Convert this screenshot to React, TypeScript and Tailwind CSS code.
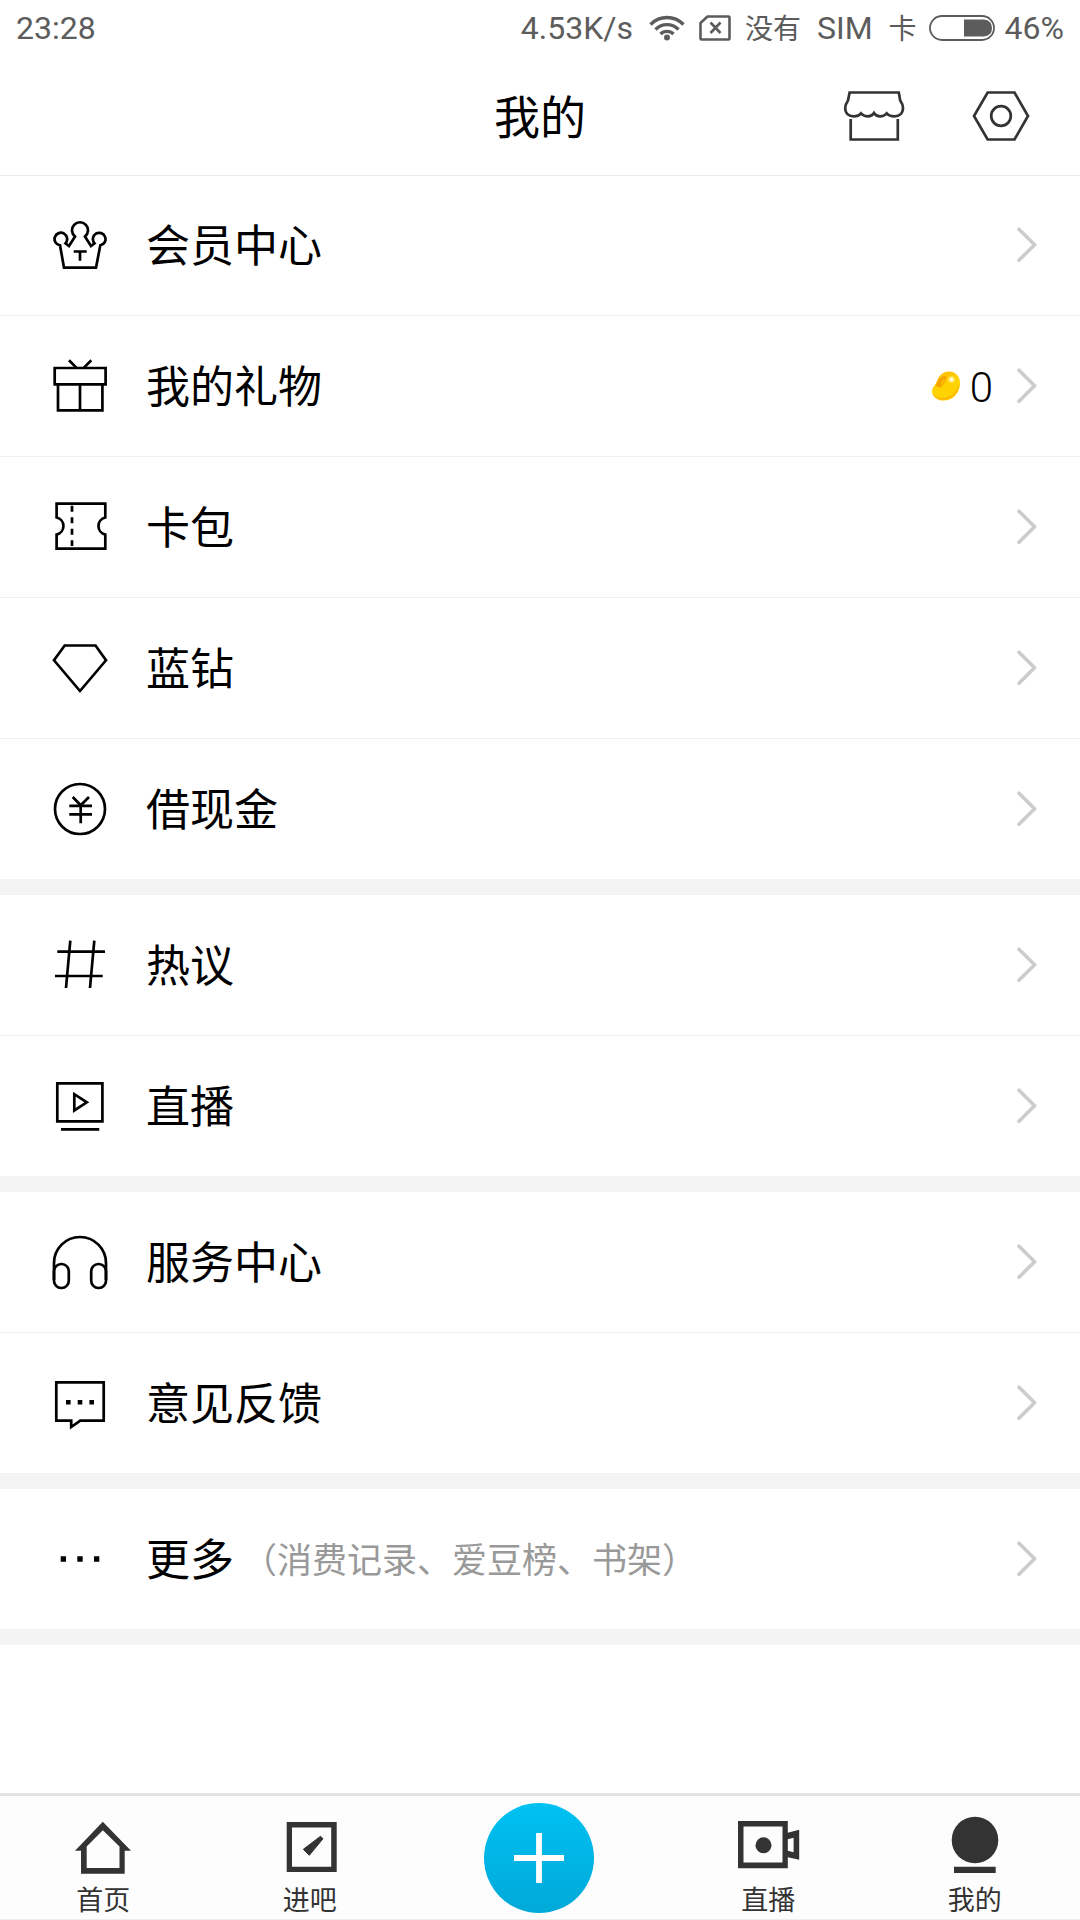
import React from 'react';

type MenuItem = {
  label: string;
  icon: React.ReactNode;
  note?: string;
  beans?: number;
};

const LineIcon: React.FC<{ children: React.ReactNode }> = ({ children }) => (
  <svg
    className="h-14 w-14 shrink-0"
    viewBox="0 0 56 56"
    fill="none"
    stroke="#000"
    strokeWidth="2.7"
    aria-hidden="true"
  >
    {children}
  </svg>
);

const TabIcon: React.FC<{ children: React.ReactNode }> = ({ children }) => (
  <svg className="h-[60px] w-16" viewBox="0 0 64 60" fill="#333" aria-hidden="true">
    {children}
  </svg>
);

const CrownIcon = () => (
  <LineIcon>
    <path d="M8 28.3A6.3 6.3 0 1 1 13.5 26.3L17 29L23 19.5A8 8 0 1 1 33 19.5L39 29L42.5 26.3A6.3 6.3 0 1 1 48.3 28.3L44 50.7H12Z" />
    <path d="M21.7 34.5H34.7M28 34.5V43.7" />
  </LineIcon>
);

const GiftIcon = () => (
  <LineIcon>
    <path d="M2.7 10H53.6V26.4H2.7ZM6 26.4V52.4H50.4V26.4M28 26.4V52.4" />
    <path d="M17 2.3L24.3 9.6M39.3 2.3L32 9.6" />
  </LineIcon>
);

const TicketIcon = () => (
  <LineIcon>
    <path d="M4.6 4.6H53.3V18.5A8.7 8.7 0 0 0 53.3 35.5V49.7H4.6V35.5A8.7 8.7 0 0 0 4.6 18.5Z" />
    <path d="M20 6.7V47" strokeDasharray="6 5.5" />
  </LineIcon>
);

const DiamondIcon = () => (
  <LineIcon>
    <path d="M12.7 5.5H43.5L54 20.3L28 51L2 20.3Z" />
  </LineIcon>
);

const YuanIcon = () => (
  <LineIcon>
    <circle cx="28" cy="28" r="25" />
    <path d="M20.7 16L28.7 24.3L37 16M17.3 24.8H40M17.3 33.4H40M28.7 24V42.3" />
  </LineIcon>
);

const TopicIcon = () => (
  <LineIcon>
    <path d="M5.3 14.7H53M3 39H50.7M18.3 3.7L14 51M42.3 3.7L38 51" />
  </LineIcon>
);

const LiveIcon = () => (
  <LineIcon>
    <path d="M5.3 5.3H50.4V43.3H5.3ZM9 51.3H47.3M22.3 16.2V32.4L34.8 24.3Z" />
  </LineIcon>
);

const HeadphoneIcon = () => (
  <LineIcon>
    <path d="M2 46V29A26 26 0 0 1 54 29V46" />
    <rect x="2" y="30" width="14.8" height="24" rx="7.2" />
    <rect x="39.2" y="30" width="14.8" height="24" rx="7.2" />
  </LineIcon>
);

const FeedbackIcon = () => (
  <LineIcon>
    <path d="M4.3 7.3H51.7V45.7H28.3L19.2 52V45.7H4.3Z" />
    <path d="M14 27.2H18.6M25.7 27.2H30.3M37.4 27.2H42" strokeWidth="4.4" />
  </LineIcon>
);

const MoreIcon = () => (
  <LineIcon>
    <path d="M8.7 28H14M25.3 28H30.7M42 28H47.3" strokeWidth="5.4" />
  </LineIcon>
);

const BeanIcon = () => (
  <svg className="h-[30px] w-7" viewBox="0 0 28 30" aria-hidden="true">
    <defs>
      <linearGradient id="bean" x1="0" y1="0" x2="0.3" y2="1">
        <stop offset="0" stopColor="#ffb400" />
        <stop offset="0.4" stopColor="#ffd000" />
        <stop offset="1" stopColor="#ffd400" />
      </linearGradient>
    </defs>
    <path
      d="M16.5 .6C23 .4 28 5 28 12C28 22 21 29.6 11.5 29.6C5 29.6 0 25.5 0 20.5C0 16.5 3 14.5 4.5 11C6.5 5.5 10 .8 16.5 .6Z"
      fill="url(#bean)"
    />
    <path d="M1 22.5C3 27 7 28.8 11.5 28.8C20 28.8 26.5 22 27.3 13C24.5 22 18 27 11 27C6 27 3 25.5 1 22.5Z" fill="#ffb300" />
    <path d="M4 14C6 7.500 9.5 4.5 13 5C15.5 6 14 9 12.5 12C11 15 8 17 6 16C5 15.5 4 15 4 14Z" fill="#f3a200" />
    <path d="M8.5 12.5C9.5 9 11 7.5 13 8C13.5 10 11 14 9 14.5Z" fill="#ffb700" />
    <circle cx="19.5" cy="8.5" r="3.5" fill="#ffe14a" />
    <circle cx="19.5" cy="8.5" r="2" fill="#fffbe0" />
  </svg>
);

const Chevron = () => (
  <svg
    className="h-9 w-5 shrink-0"
    viewBox="0 0 20 36"
    fill="none"
    stroke="#ccc"
    strokeWidth="3.6"
    strokeLinecap="round"
    strokeLinejoin="round"
    aria-hidden="true"
  >
    <path d="M2 2.2L17.6 17.7L2 33.2" />
  </svg>
);

const sections: MenuItem[][] = [
  [
    { label: '会员中心', icon: <CrownIcon /> },
    { label: '我的礼物', icon: <GiftIcon />, beans: 0 },
    { label: '卡包', icon: <TicketIcon /> },
    { label: '蓝钻', icon: <DiamondIcon /> },
    { label: '借现金', icon: <YuanIcon /> },
  ],
  [
    { label: '热议', icon: <TopicIcon /> },
    { label: '直播', icon: <LiveIcon /> },
  ],
  [
    { label: '服务中心', icon: <HeadphoneIcon /> },
    { label: '意见反馈', icon: <FeedbackIcon /> },
  ],
  [{ label: '更多', icon: <MoreIcon />, note: '（消费记录、爱豆榜、书架）' }],
];

const StatusBar = () => (
  <div className="flex h-14 items-center justify-between px-4 text-[32px] leading-none text-[#5c5c5c]">
    <span>23:28</span>
    <div className="flex items-center">
      <span>4.53K/s</span>
      <svg className="ml-4 h-[26px] w-9" viewBox="0 0 36 26" fill="none" stroke="#5c5c5c" strokeWidth="3.4" aria-hidden="true">
        <path d="M1.5 9.5C11 .2 25 .2 34.5 9.5M6.5 14.5C13 8 23 8 29.5 14.5M11.5 19C15 15.5 21 15.5 24.5 19" />
        <circle cx="18" cy="22.5" r="3" fill="#5c5c5c" stroke="none" />
      </svg>
      <svg className="ml-[14px] h-[26px] w-8" viewBox="0 0 32 26" fill="none" stroke="#5c5c5c" strokeWidth="2.6" aria-hidden="true">
        <path d="M8.5 1.5H29.5Q30.5 1.5 30.5 2.5V23.5Q30.5 24.5 29.5 24.5H2.5Q1.5 24.5 1.5 23.5V8Z" strokeLinejoin="round" />
        <path d="M11.5 7.5L21.5 18M21.5 7.5L11.5 18" />
      </svg>
      <span className="ml-[14px] flex items-center gap-4">
        <span className="pt-1 text-[28px]">没有</span>
        <span>SIM</span>
        <span className="pt-1 text-[28px]">卡</span>
      </span>
      <svg className="ml-3 h-[26px] w-[66px]" viewBox="0 0 66 26" aria-hidden="true">
        <rect x="1" y="1" width="64" height="24" rx="12" fill="none" stroke="#5c5c5c" strokeWidth="1.8" />
        <path d="M35 4.5H54.5Q63 5 63 13Q63 21 54.5 21.5H35Z" fill="#5c5c5c" />
      </svg>
      <span className="ml-[10px]">46%</span>
    </div>
  </div>
);

const Header = () => (
  <header className="relative flex h-[120px] items-center justify-end gap-[67px] border-b border-[#ebebeb] pr-[50px]">
    <h1 className="absolute inset-x-0 pt-1 text-center text-[46px] leading-none">我的</h1>
    <button type="button" aria-label="商店" className="relative">
      <svg className="block h-[52px] w-[62px]" viewBox="0 0 62 52" fill="none" stroke="#333" strokeWidth="2.7" aria-hidden="true">
        <path d="M6.6 2.5H55.8L57.2 10.5C59 13 60 15 60 18C60 23.5 56 26.3 51.5 26.3C48 26.3 45.5 25.5 43.7 23.3C41.8 25.5 39.5 26.3 37 26.3C34.5 26.3 32.5 25.3 31 23C29.5 25.3 27.5 26.3 25 26.3C22.5 26.3 20 25.5 18 23.3C16.3 25.5 14 26.3 10.5 26.3C6 26.3 2.2 23.5 2.2 18C2.2 15 3.3 13 5 10.5Z" />
        <path d="M7.7 29V49.5H54.8V29" />
      </svg>
    </button>
    <button type="button" aria-label="设置" className="relative">
      <svg className="block h-[52px] w-[58px]" viewBox="0 0 58 52" fill="none" stroke="#333" strokeWidth="2.7" aria-hidden="true">
        <path d="M15.6 2.5H42.5L56 26L42.5 49.5H15.6L2 26Z" />
        <circle cx="29" cy="26" r="9.8" />
      </svg>
    </button>
  </header>
);

const MenuRow: React.FC<{ item: MenuItem }> = ({ item }) => (
  <a href="#" className="flex items-center py-[42px] pr-[43px] pl-[52px]">
    {item.icon}
    <span className="ml-[38px] pt-1 text-[44px] leading-none">{item.label}</span>
    {item.note && <span className="ml-2 pt-1 text-[35px] leading-none text-[#999]">{item.note}</span>}
    <span className="ml-auto flex items-center">
      {item.beans !== undefined && (
        <span className="mr-6 flex items-center gap-[10px] text-[42px] leading-none">
          <BeanIcon />
          <span className="pt-1 font-light">{item.beans}</span>
        </span>
      )}
      <Chevron />
    </span>
  </a>
);

const Tab: React.FC<{ label: string; children: React.ReactNode }> = ({ label, children }) => (
  <a href="#" className="flex flex-1 flex-col items-center gap-[9px] pt-5 pb-[2px] text-[27px] leading-8 text-[#333]">
    <TabIcon>{children}</TabIcon>
    {label}
  </a>
);

const TabBar = () => (
  <nav className="flex items-stretch border-t-[3px] border-b border-t-[#e3e3e3] border-b-[#eee] bg-[#fdfdfd] pr-[2px]">
    <Tab label="首页">
      <path
        fillRule="evenodd"
        d="M31.8 5.7L60 34.7H53.7V57.7H10V34.7H4ZM31.8 14.3L15.7 30.5V52H48.5V30.5Z"
      />
    </Tab>
    <Tab label="进吧">
      <path fillRule="evenodd" d="M8.7 6H58.7V56H8.7ZM14 11.5V50.7H53.2V11.5Z" />
      <path d="M42.5 20.3L45 22.7L31.3 39.3L25.3 33.3Z" stroke="#333" strokeLinejoin="round" />
    </Tab>
    <div className="flex w-[252px] items-center justify-center">
      <button
        type="button"
        aria-label="发布"
        className="flex size-[110px] items-center justify-center rounded-full bg-linear-to-b from-[#00c1f3] to-[#00a9d8]"
      >
        <svg className="size-[50px]" viewBox="0 0 50 50" stroke="#fff" strokeWidth="5.8" aria-hidden="true">
          <path d="M0 25H50M25 0V50" />
        </svg>
      </button>
    </div>
    <Tab label="直播">
      <path
        fillRule="evenodd"
        d="M2 5H51.8V16.7L63.2 13.7V43.7L51.8 41.3V52.3H2ZM7.5 10.5V46.5H46.5V10.5ZM51.8 23.3V34.7L57.6 36.2V21.7Z"
      />
      <circle cx="27.5" cy="29.3" r="8" />
    </Tab>
    <Tab label="我的">
      <circle cx="32" cy="24" r="23.3" />
      <path d="M11 50.7H52.7V57H11Z" />
    </Tab>
  </nav>
);

export default function App() {
  return (
    <div className="flex min-h-screen flex-col bg-white font-[Roboto,'Noto_Sans_CJK_SC',sans-serif] text-black">
      <StatusBar />
      <Header />
      <main className="-mt-px flex-1">
        {sections.map((items) => (
          <section key={items[0].label} className="divide-y divide-[#f1f1f1] border-b-16 border-[#f4f4f4]">
            {items.map((item) => (
              <MenuRow key={item.label} item={item} />
            ))}
          </section>
        ))}
      </main>
      <TabBar />
    </div>
  );
}
